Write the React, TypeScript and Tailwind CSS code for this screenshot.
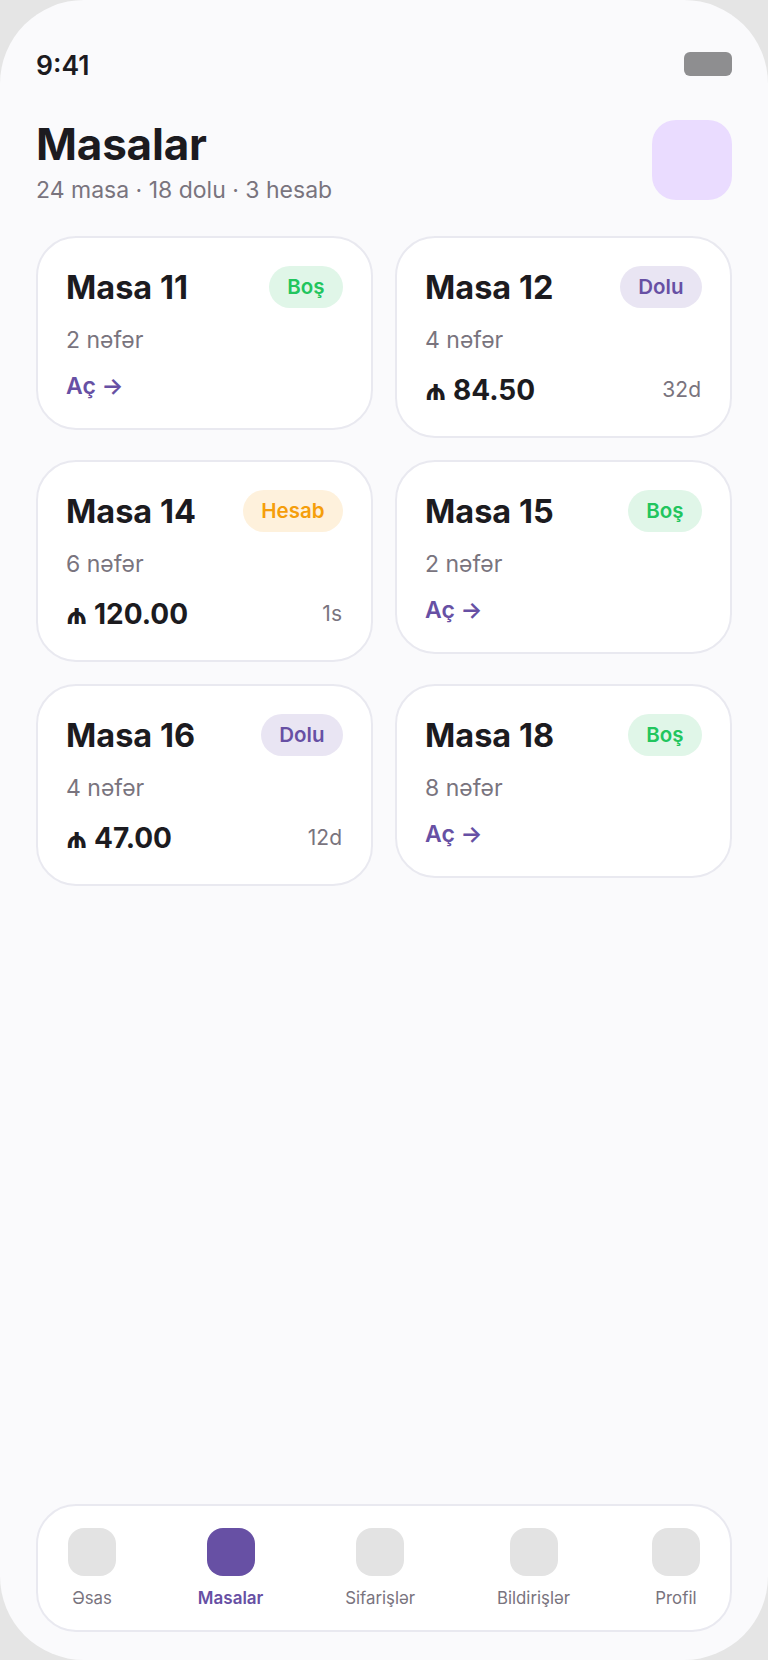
import React from "react";

type Status = "Boş" | "Dolu" | "Hesab";
type T = { name: string; guests: string; status: Status; amount?: string; time?: string };

const tables: T[] = [
  { name: "Masa 11", guests: "2 nəfər", status: "Boş" },
  { name: "Masa 12", guests: "4 nəfər", status: "Dolu", amount: "₼ 84.50", time: "32d" },
  { name: "Masa 14", guests: "6 nəfər", status: "Hesab", amount: "₼ 120.00", time: "1s" },
  { name: "Masa 15", guests: "2 nəfər", status: "Boş" },
  { name: "Masa 16", guests: "4 nəfər", status: "Dolu", amount: "₼ 47.00", time: "12d" },
  { name: "Masa 18", guests: "8 nəfər", status: "Boş" },
];

const badge: Record<Status, string> = {
  "Boş": "bg-[#e0f6e8] text-[#22c55e]",
  Dolu: "bg-[#e9e5f3] text-[#6750a4]",
  Hesab: "bg-[#fef1dc] text-[#f59e0b]",
};

function Card({ t }: { t: T }) {
  return (
    <div className="self-start rounded-[40px] border-2 border-[#e9e9f0] bg-white px-[28px] pt-[28px] pb-[28px]">
      <div className="flex items-start justify-between">
        <span className="text-[32.5px] leading-[44px] font-bold text-[#1c1b1f]">{t.name}</span>
        <span className={`h-[42px] rounded-full px-[18.5px] text-[20.5px] leading-[42px] font-semibold ${badge[t.status]}`}>{t.status}</span>
      </div>
      <div className="mt-[16px] text-[23px] leading-[28px] text-[#79747e]">{t.guests}</div>
      {t.amount ? (
        <div className="mt-[20px] mb-[2px] flex items-center justify-between">
          <span className="text-[28px] leading-[32px] font-bold text-[#1c1b1f]">{t.amount}</span>
          <span className="mr-[1px] text-[21px] leading-[32px] text-[#79747e]">{t.time}</span>
        </div>
      ) : (
        <div className="mt-[18px] text-[23px] leading-[28px] font-semibold text-[#6750a4]">Aç →</div>
      )}
    </div>
  );
}

function NavItem({ label, active }: { label: string; active?: boolean }) {
  return (
    <div className="flex flex-col items-center gap-[12px]">
      <div className={`h-[48px] w-[48px] rounded-[16px] ${active ? "bg-[#6750a4]" : "bg-[#e3e3e3]"}`} />
      <span className={`leading-[20px] ${active ? "text-[17px] font-semibold text-[#6750a4]" : "text-[16.8px] text-[#79747e]"}`}>{label}</span>
    </div>
  );
}

export default function App() {
  return (
    <div className="h-[1660px] w-[768px] bg-[#e5e5e5] font-['Inter',sans-serif]">
      <div className="flex h-full flex-col rounded-[84px] bg-[#fafafc] px-[36px] pt-[52px] pb-[28px]">
        <div className="flex h-[24px] items-center justify-between">
          <span className="mt-[2px] text-[26.5px] leading-[26px] font-semibold text-[#1c1b1f]">9:41</span>
          <div className="h-[24px] w-[48px] rounded-[6px] bg-[#8e8e90]" />
        </div>
        <div className="mt-[44px] flex h-[80px] items-start justify-between">
          <div>
            <div className="text-[44px] leading-[48px] font-bold tracking-[-0.2px] text-[#1c1b1f]">Masalar</div>
            <div className="mt-[10px] text-[23px] leading-[24px] text-[#79747e]">24 masa · 18 dolu · 3 hesab</div>
          </div>
          <div className="h-[80px] w-[80px] rounded-[24px] bg-[#eadcff]" />
        </div>
        <div className="mt-[36px] grid grid-cols-2 gap-[22px]">
          {tables.map((t) => (
            <Card key={t.name} t={t} />
          ))}
        </div>
        <div className="mt-auto flex items-start justify-between rounded-[40px] border-2 border-[#e9e9f0] bg-white px-[30px] pt-[22px] pb-[22px]">
          <NavItem label="Əsas" />
          <NavItem label="Masalar" active />
          <NavItem label="Sifarişlər" />
          <NavItem label="Bildirişlər" />
          <NavItem label="Profil" />
        </div>
      </div>
    </div>
  );
}
